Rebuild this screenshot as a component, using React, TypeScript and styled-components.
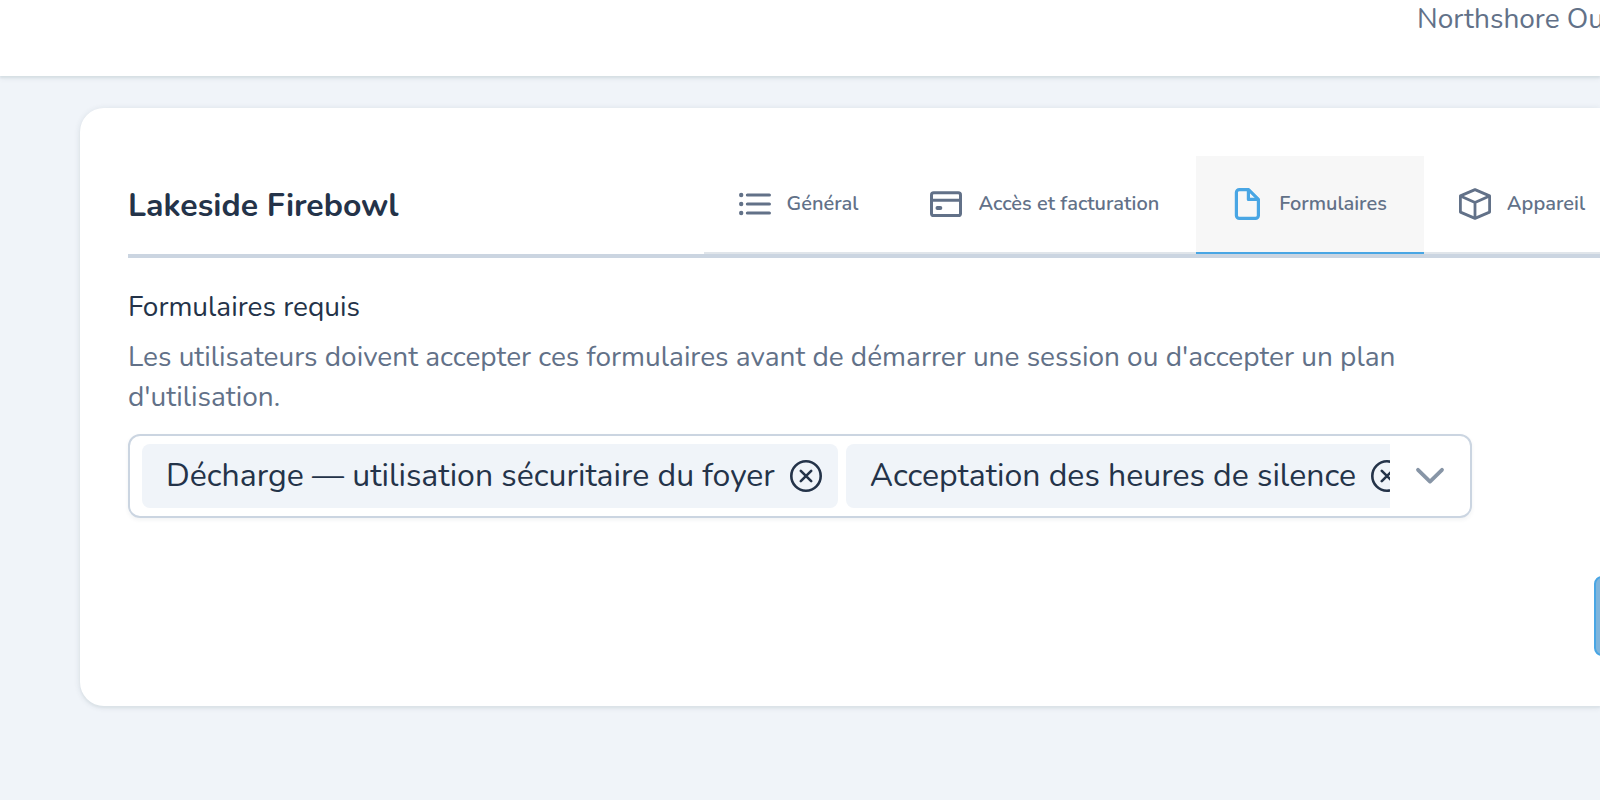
import React from 'react';
import styled, { createGlobalStyle } from 'styled-components';

const color = {
  page: '#f0f4f9',
  ink: '#243349',
  muted: '#627188',
  line: '#cbd5e1',
  accent: '#49a6e4',
};

const GlobalStyle = createGlobalStyle`
  *, *::before, *::after { box-sizing: border-box; }
  html { height: 100%; }
  body {
    margin: 0;
    min-height: 100%;
    background: ${color.page};
    color: ${color.ink};
    font-family: Nunito, "Open Sans", sans-serif;
    font-size: 28px;
    line-height: 40px;
    overflow-x: hidden;
  }
  h1, p { margin: 0; }
  button { font: inherit; color: inherit; }
`;

const TopBar = styled.header`
  display: flex;
  justify-content: flex-end;
  height: 76px;
  background: #fff;
  box-shadow: 0 2px 2px #d6dfe4, 0 2px 6px rgba(36, 50, 71, 0.08);
  color: ${color.muted};
  overflow: hidden;
`;

const Account = styled.span`
  flex: none;
  width: 183px;
  margin-top: -1px;
  white-space: nowrap;
`;

const Card = styled.main`
  margin: 32px 0 0 80px;
  padding: 48px 0 48px 48px;
  background: #fff;
  border-radius: 24px 0 0 24px;
  box-shadow: 0 2px 2px #dce3e8, 0 1px 6px rgba(36, 60, 71, 0.12);
  overflow: hidden;
`;

const CardHeader = styled.div`
  display: flex;
  align-items: stretch;
  border-bottom: 4px solid ${color.line};
`;

const Title = styled.h1`
  flex: 1 1 0;
  align-self: center;
  padding-top: 2px;
  font-size: 32px;
  font-weight: 700;
  line-height: 44px;
`;

const Tabs = styled.nav`
  display: flex;
  flex: none;
  margin-right: -22px;
`;

const Tab = styled.a<{ $active?: boolean }>`
  display: flex;
  align-items: center;
  gap: 16px;
  height: 98px;
  padding: 0 37px 0 35px;
  border-bottom: 2px solid ${(p) => (p.$active ? color.accent : '#e0e5ea')};
  background: ${(p) => (p.$active ? '#f7f7f7' : 'transparent')};
  color: ${color.muted};
  font-size: 20px;
  font-weight: 600;
  line-height: 28px;
  text-decoration: none;
  white-space: nowrap;

  svg { color: ${(p) => (p.$active ? color.accent : color.muted)}; }
`;

const Icon = styled.svg`
  display: block;
  flex: none;
  width: 32px;
  height: 32px;
  fill: none;
  stroke: currentColor;
  stroke-linecap: round;
  stroke-linejoin: round;
`;

const Field = styled.section`
  display: flex;
  flex-direction: column;
  max-width: 1344px;
  margin: 29px 128px 0 0;
`;

const Hint = styled.p`
  margin-top: 10px;
  color: ${color.muted};
`;

const MultiSelect = styled.div`
  display: flex;
  height: 84px;
  margin-top: 17px;
  padding: 8px 0 8px 12px;
  border: 2px solid ${color.line};
  border-radius: 12px;
  box-shadow: 0 2px 4px rgba(36, 50, 71, 0.06);
`;

const Chips = styled.div`
  display: flex;
  flex: 1;
  gap: 8px;
  min-width: 0;
  overflow: hidden;
`;

const Chip = styled.span`
  display: flex;
  flex: none;
  align-items: center;
  gap: 15px;
  padding: 0 16px 0 24px;
  border-radius: 8px;
  background: ${color.page};
  font-size: 32px;
  line-height: 44px;
  white-space: nowrap;
`;

const IconButton = styled.button`
  display: flex;
  align-items: center;
  justify-content: center;
  flex: none;
  padding: 0;
  border: 0;
  background: none;
  cursor: pointer;
`;

const Toggle = styled(IconButton)`
  width: 80px;
  color: #8795a6;
`;

const Actions = styled.div`
  display: flex;
  justify-content: flex-end;
  margin-top: 58px;
  padding-bottom: 2px;
`;

const SaveButton = styled.button`
  flex: none;
  width: 160px;
  height: 80px;
  margin-right: -154px;
  border: 2px solid ${color.accent};
  border-radius: 8px;
  background: #7fb5dc;
`;

const RemoveIcon = () => (
  <Icon viewBox="0 0 32 32" strokeWidth="2.6" aria-hidden>
    <circle cx="16" cy="16" r="14.7" />
    <path d="M10.8 10.8l10.4 10.4M21.2 10.8L10.8 21.2" />
  </Icon>
);

const icons = {
  list: (
    <Icon viewBox="0 0 32 32" aria-hidden>
      <g fill="currentColor" stroke="none">
        <circle cx="2.2" cy="7" r="2.2" />
        <circle cx="2.2" cy="16" r="2.2" />
        <circle cx="2.2" cy="25" r="2.2" />
      </g>
      <path strokeWidth="3.2" d="M8.4 7h22M8.4 16h22M8.4 25h22" />
    </Icon>
  ),
  card: (
    <Icon viewBox="0 0 32 32" aria-hidden>
      <rect x="1.5" y="4.8" width="29" height="22.8" rx="2.2" strokeWidth="3" />
      <path strokeWidth="3" strokeLinecap="butt" d="M1.3 12.2h29.4" />
      <path strokeWidth="3.8" d="M7.4 20h3" />
    </Icon>
  ),
  file: (
    <Icon viewBox="0 0 32 32" strokeWidth="3.2" strokeLinejoin="miter" aria-hidden>
      <path d="M17.6 1.6H8.4A3 3 0 0 0 5.4 4.6v22.8a3 3 0 0 0 3 3h16a3 3 0 0 0 3-3V11.3z" />
      <path strokeLinecap="butt" d="M17.4 1.5v9.9h10" />
    </Icon>
  ),
  box: (
    <Icon viewBox="0 0 32 32" strokeWidth="2.8" strokeLinejoin="miter" aria-hidden>
      <path d="M16 1.6L30.6 7.9v16.2L16 30.4 1.4 24.1V7.9z" />
      <path strokeLinecap="butt" d="M1.4 7.9L16 14.6l14.6-6.7M16 14.6v16" />
    </Icon>
  ),
};

const tabs = [
  { label: 'Général', icon: icons.list },
  { label: 'Accès et facturation', icon: icons.card },
  { label: 'Formulaires', icon: icons.file, active: true },
  { label: 'Appareil', icon: icons.box },
];

const forms = ['Décharge — utilisation sécuritaire du foyer', 'Acceptation des heures de silence'];

export default function App() {
  return (
    <>
      <GlobalStyle />
      <TopBar>
        <Account>Northshore Ou</Account>
      </TopBar>
      <Card>
        <CardHeader>
          <Title>Lakeside Firebowl</Title>
          <Tabs>
            {tabs.map((tab) => (
              <Tab key={tab.label} href="#" $active={tab.active} aria-current={tab.active ? 'page' : undefined}>
                {tab.icon}
                {tab.label}
              </Tab>
            ))}
          </Tabs>
        </CardHeader>
        <Field aria-labelledby="forms-label" aria-describedby="forms-hint">
          <span id="forms-label">Formulaires requis</span>
          <Hint id="forms-hint">
            Les utilisateurs doivent accepter ces formulaires avant de démarrer une session ou d'accepter un plan
            d'utilisation.
          </Hint>
          <MultiSelect role="group" aria-labelledby="forms-label">
            <Chips>
              {forms.map((form) => (
                <Chip key={form}>
                  {form}
                  <IconButton type="button" aria-label={`Retirer ${form}`}>
                    <RemoveIcon />
                  </IconButton>
                </Chip>
              ))}
            </Chips>
            <Toggle type="button" aria-label="Afficher les formulaires">
              <Icon viewBox="0 0 32 32" strokeWidth="3.8" strokeLinejoin="miter" aria-hidden>
                <path d="M4 9.8L16 21.6 28 9.8" />
              </Icon>
            </Toggle>
          </MultiSelect>
        </Field>
        <Actions>
          <SaveButton type="submit" aria-label="Enregistrer" />
        </Actions>
      </Card>
    </>
  );
}
